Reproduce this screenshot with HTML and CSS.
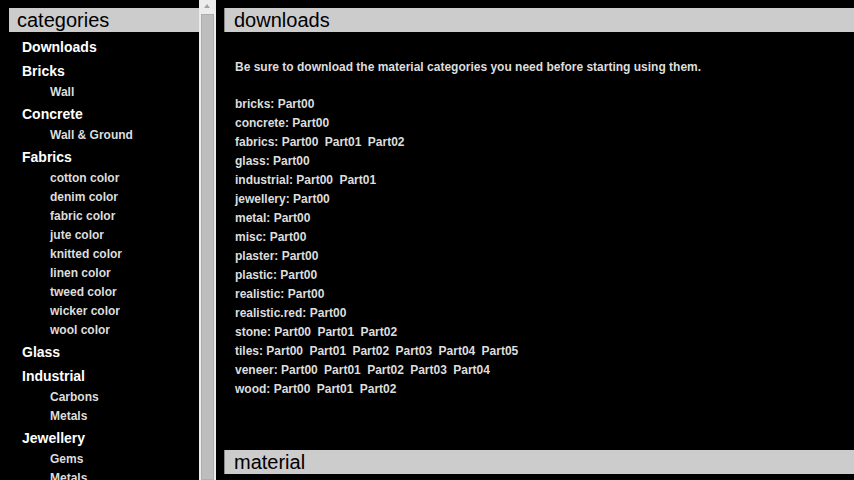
FILE: index.html
```html
<!DOCTYPE html>
<html lang="en">
<head>
    <meta charset="UTF-8">
    <meta name="viewport" content="width=device-width, initial-scale=1.0">
    <title>Materials - Downloads</title>
    <link rel="stylesheet" href="styles.css">
</head>
<body>

    <!-- Left frame: category menu -->
    <div class="side">
        <h2 class="box-title">categories</h2>
        <ul class="cats">
            <li><a class="cat" href="#">Downloads</a></li>
            <li>
                <a class="cat" href="#">Bricks</a>
                <ul class="subs">
                    <li><a href="#">Wall</a></li>
                </ul>
            </li>
            <li>
                <a class="cat" href="#">Concrete</a>
                <ul class="subs">
                    <li><a href="#">Wall &amp; Ground</a></li>
                </ul>
            </li>
            <li>
                <a class="cat" href="#">Fabrics</a>
                <ul class="subs">
                    <li><a href="#">cotton color</a></li>
                    <li><a href="#">denim color</a></li>
                    <li><a href="#">fabric color</a></li>
                    <li><a href="#">jute color</a></li>
                    <li><a href="#">knitted color</a></li>
                    <li><a href="#">linen color</a></li>
                    <li><a href="#">tweed color</a></li>
                    <li><a href="#">wicker color</a></li>
                    <li><a href="#">wool color</a></li>
                </ul>
            </li>
            <li><a class="cat" href="#">Glass</a></li>
            <li>
                <a class="cat" href="#">Industrial</a>
                <ul class="subs">
                    <li><a href="#">Carbons</a></li>
                    <li><a href="#">Metals</a></li>
                </ul>
            </li>
            <li>
                <a class="cat" href="#">Jewellery</a>
                <ul class="subs">
                    <li><a href="#">Gems</a></li>
                    <li><a href="#">Metals</a></li>
                </ul>
            </li>
        </ul>
    </div>

    <!-- Frame scrollbar -->
    <div class="scrollbar">
        <div class="arrow"></div>
        <div class="thumb"></div>
    </div>

    <!-- Right frame: content -->
    <div class="main">
        <div class="section">
            <h2 class="box-title">downloads</h2>
            <p class="note">Be sure to download the material categories you need before starting using them.</p>
            <ul class="parts">
                <li>bricks: <a href="#">Part00</a></li>
                <li>concrete: <a href="#">Part00</a></li>
                <li>fabrics: <a href="#">Part00</a> <a href="#">Part01</a> <a href="#">Part02</a></li>
                <li>glass: <a href="#">Part00</a></li>
                <li>industrial: <a href="#">Part00</a> <a href="#">Part01</a></li>
                <li>jewellery: <a href="#">Part00</a></li>
                <li>metal: <a href="#">Part00</a></li>
                <li>misc: <a href="#">Part00</a></li>
                <li>plaster: <a href="#">Part00</a></li>
                <li>plastic: <a href="#">Part00</a></li>
                <li>realistic: <a href="#">Part00</a></li>
                <li>realistic.red: <a href="#">Part00</a></li>
                <li>stone: <a href="#">Part00</a> <a href="#">Part01</a> <a href="#">Part02</a></li>
                <li>tiles: <a href="#">Part00</a> <a href="#">Part01</a> <a href="#">Part02</a> <a href="#">Part03</a> <a href="#">Part04</a> <a href="#">Part05</a></li>
                <li>veneer: <a href="#">Part00</a> <a href="#">Part01</a> <a href="#">Part02</a> <a href="#">Part03</a> <a href="#">Part04</a></li>
                <li>wood: <a href="#">Part00</a> <a href="#">Part01</a> <a href="#">Part02</a></li>
            </ul>
        </div>

        <div class="section">
            <h2 class="box-title">material</h2>
        </div>
    </div>

</body>
</html>
```

FILE: styles.css
```css
body {
    font-family: "Liberation Sans", Arial, sans-serif;
    margin: 0;
    padding: 0;
    display: flex;
    height: 480px;
    overflow: hidden;
    background-color: #000;
    color: #ddd;
}

a {
    color: inherit;
    text-decoration: none;
}

ul {
    list-style: none;
    margin: 0;
    padding: 0;
}

/* Grey title bars */
.box-title {
    margin: 0;
    height: 24px;
    line-height: 24px;
    font-size: 20px;
    font-weight: normal;
    color: #000;
    background-color: #ccc;
    padding-left: 8px;
}

/* Left frame */
.side {
    width: 190px;
    flex-shrink: 0;
    padding: 8px 0 0 9px;
    overflow: hidden;
}

.cats {
    margin-top: 3px;
    padding-left: 13px;
}

.cat {
    display: block;
    height: 24px;
    line-height: 24px;
    font-size: 14px;
    font-weight: bold;
    color: #fff;
}

.subs {
    padding-left: 28px;
}

.subs a {
    display: block;
    line-height: 19px;
    font-size: 12px;
    font-weight: bold;
    color: #ddd;
}

/* Scrollbar of the left frame */
.scrollbar {
    width: 13px;
    flex-shrink: 0;
    padding: 0 2px;
    background-color: #ececec;
    display: flex;
    flex-direction: column;
}

.arrow {
    height: 14px;
    position: relative;
}

.arrow::after {
    content: "";
    position: absolute;
    left: 3px;
    top: 4px;
    border-left: 3.5px solid transparent;
    border-right: 3.5px solid transparent;
    border-bottom: 4px solid #a3a3a3;
}

.thumb {
    flex: 1;
    background-color: #bdbdbd;
    border: 1px solid #adadad;
}

/* Right frame */
.main {
    flex: 1;
    padding: 8px 0 0 8px;
    overflow: hidden;
}

.main .box-title {
    border-left: 1px solid #8a8a8a;
    padding-left: 9px;
}

.section {
    margin-bottom: 51px;
}

.note {
    margin: 26px 0 18px 11px;
    font-size: 12px;
    font-weight: bold;
    line-height: 19px;
}

.parts {
    padding-left: 11px;
}

.parts li {
    font-size: 12px;
    font-weight: bold;
    line-height: 19px;
}

.parts a + a {
    margin-left: 3px;
}
```
